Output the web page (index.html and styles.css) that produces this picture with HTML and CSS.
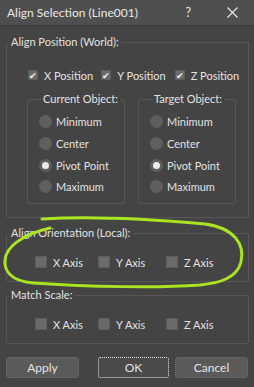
FILE: index.html
```html
<!DOCTYPE html>
<html>
<head>
<meta charset="utf-8">
<link rel="stylesheet" href="styles.css">
</head>
<body>
<div class="dialog">
  <div class="titlebar">
    <span class="title">Align Selection (Line001)</span>
    <span class="help">?</span>
    <svg class="close" width="11" height="11" viewBox="0 0 11 11"><path d="M0.5 0.5 L10.5 10.5 M10.5 0.5 L0.5 10.5" stroke="#e6e6e6" stroke-width="1.2" fill="none"/></svg>
  </div>

  <fieldset class="group pos">
    <legend>Align Position (World):</legend>
    <div class="checks top">
      <label class="chk"><span class="box on">✔</span>X Position</label>
      <label class="chk"><span class="box on">✔</span>Y Position</label>
      <label class="chk"><span class="box on">✔</span>Z Position</label>
    </div>
    <div class="subs">
      <fieldset class="sub">
        <legend>Current Object:</legend>
        <div class="radio"><span class="dot"></span>Minimum</div>
        <div class="radio"><span class="dot"></span>Center</div>
        <div class="radio"><span class="dot sel"></span>Pivot Point</div>
        <div class="radio"><span class="dot"></span>Maximum</div>
      </fieldset>
      <fieldset class="sub">
        <legend>Target Object:</legend>
        <div class="radio"><span class="dot"></span>Minimum</div>
        <div class="radio"><span class="dot"></span>Center</div>
        <div class="radio"><span class="dot sel"></span>Pivot Point</div>
        <div class="radio"><span class="dot"></span>Maximum</div>
      </fieldset>
    </div>
  </fieldset>

  <fieldset class="group axes">
    <legend>Align Orientation (Local):</legend>
    <div class="checks">
      <label class="chk"><span class="box"></span>X Axis</label>
      <label class="chk"><span class="box"></span>Y Axis</label>
      <label class="chk"><span class="box"></span>Z Axis</label>
    </div>
  </fieldset>

  <fieldset class="group axes scale">
    <legend>Match Scale:</legend>
    <div class="checks">
      <label class="chk"><span class="box"></span>X Axis</label>
      <label class="chk"><span class="box"></span>Y Axis</label>
      <label class="chk"><span class="box"></span>Z Axis</label>
    </div>
  </fieldset>

  <div class="buttons">
    <button class="btn">Apply</button>
    <button class="btn ok">OK</button>
    <button class="btn">Cancel</button>
  </div>

  <svg class="scribble" width="254" height="387" viewBox="0 0 254 387">
    <path d="M42 219 C90 216 160 220 205 224 C235 228 245 245 241 262 C237 278 220 283 200 285 C160 288 90 287 33 283 C10 281 4 270 5 260 C6 248 20 235 50 228" stroke="#a9e321" stroke-width="3" fill="none" stroke-linecap="round"/>
  </svg>
</div>
</body>
</html>
```
FILE: styles.css
```css
* { box-sizing: border-box; }
html, body {
  margin: 0;
  padding: 0;
  background: #444444;
}
body {
  width: 254px;
  height: 387px;
  overflow: hidden;
  font-family: Lato, "Open Sans", sans-serif;
  font-size: 11px;
  color: #e2e2e2;
}
.dialog {
  position: relative;
  width: 254px;
  height: 387px;
}
.titlebar {
  height: 26px;
  background: #4f4f4f;
  display: flex;
  align-items: center;
  padding-left: 7px;
  border-bottom: 1px solid #3c3c3c;
}
.title {
  font-size: 12px;
  color: #e8e8e8;
  flex: 1;
}
.help {
  font-size: 12.5px;
  color: #e6e6e6;
  margin-right: 36px;
}
.close {
  margin-right: 16px;
}
.group {
  margin: 0 5px 0 6px;
  border: 1px solid #575757;
  border-radius: 2px;
  padding: 0;
  min-width: 0;
}
.group legend {
  padding: 0 3px 0 4px;
  margin-left: 0;
  line-height: 16px;
  white-space: nowrap;
}
.pos {
  margin-top: 8px;
  height: 184px;
}
.checks {
  display: flex;
  align-items: center;
  height: 16px;
}
.checks.top {
  margin-top: 17px;
  padding-left: 21px;
}
.checks.top .chk { width: 75px; }
.chk {
  display: flex;
  align-items: center;
  gap: 6px;
  white-space: nowrap;
}
.box {
  width: 10px;
  height: 10px;
  background: #6a6a6a;
  border: 1px solid #5c5c5c;
  display: flex;
  align-items: center;
  justify-content: center;
  font-size: 9px;
  line-height: 1;
  color: #f2f2f2;
}
.subs {
  display: flex;
  gap: 13px;
  padding-left: 20px;
  margin-top: 8px;
}
.sub {
  width: 98px;
  height: 113px;
  margin: 0;
  border: 1px solid #575757;
  border-radius: 2px;
  padding: 4px 0 0 11px;
  min-width: 0;
}
.sub legend {
  padding: 0 2px;
  margin-left: 2px;
  line-height: 16px;
  white-space: nowrap;
}
.radio {
  display: flex;
  align-items: center;
  gap: 4px;
  height: 21.7px;
  white-space: nowrap;
}
.dot {
  width: 13px;
  height: 13px;
  border-radius: 50%;
  background: #5f5f5f;
  display: flex;
  align-items: center;
  justify-content: center;
}
.dot.sel::after {
  content: "";
  width: 7px;
  height: 7px;
  border-radius: 50%;
  background: #ececec;
}
.axes {
  margin-top: 7px;
  height: 57px;
}
.scale {
  margin-top: 5px;
}
.axes .checks {
  margin-top: 13px;
  padding-left: 28px;
}
.axes .chk:nth-child(1) { width: 63px; }
.axes .chk:nth-child(2) { width: 68px; }
.axes .box { width: 12px; height: 12px; }
.buttons {
  display: flex;
  margin: 13px 6px 0 6px;
}
.btn {
  width: 73px;
  height: 21px;
  background: #5a5a5a;
  border: 1px solid #636363;
  border-radius: 3px;
  color: #e4e4e4;
  font-family: Lato, "Open Sans", sans-serif;
  font-size: 12px;
  padding: 0;
}
.btn.ok {
  width: 71px;
  margin: 0 6px 0 19px;
  background: #4a4a4a;
  border: 1px dotted #e8e8e8;
  border-radius: 2px;
}
.scribble {
  position: absolute;
  left: 0;
  top: 0;
  pointer-events: none;
}
```
